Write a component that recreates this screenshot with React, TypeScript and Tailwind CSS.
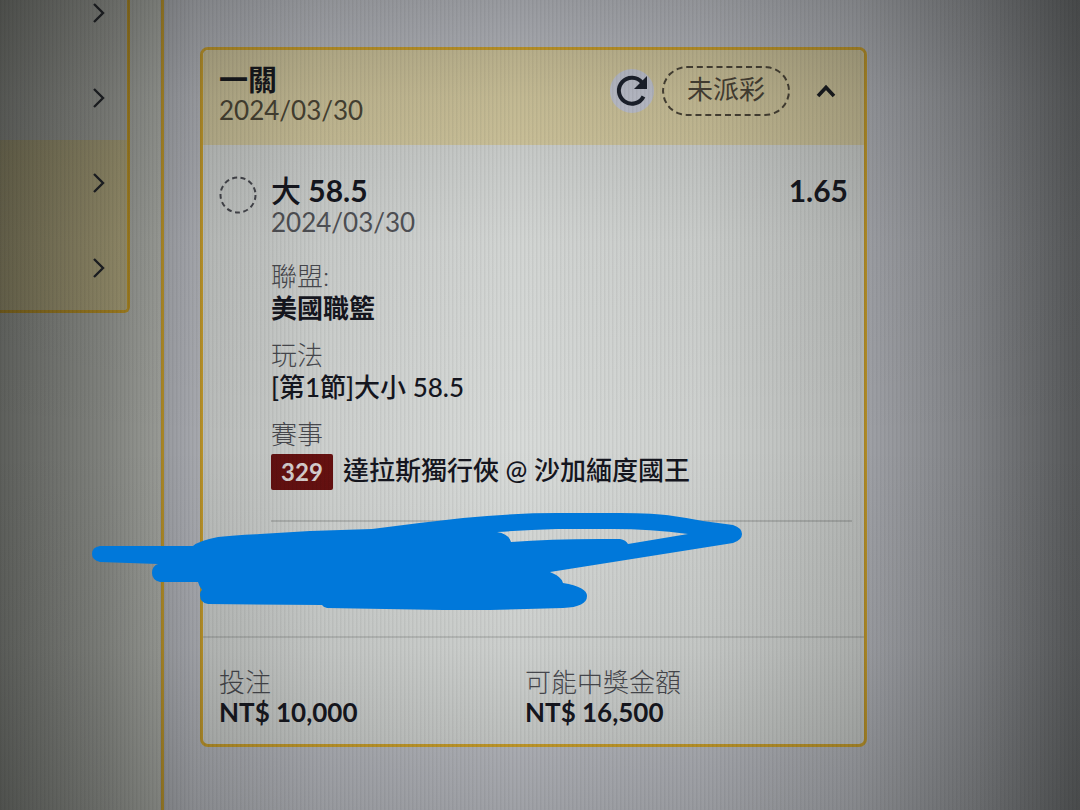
import React from 'react';

const rows = [
  { label: '選項一', active: false },
  { label: '選項二', active: false },
  { label: '選項三', active: true },
  { label: '選項四', active: true },
];

function Sidebar() {
  return (
    <aside className="w-[164px] shrink-0 overflow-hidden border-r-[3px] border-[#d6a82c] bg-[#c4c6c0]">
      <nav className="-mt-[30px] mr-[31px] overflow-hidden rounded-br-md border-r-[3px] border-b-[3px] border-[#dcaa24]">
        {rows.map((row) => (
          <button
            key={row.label}
            type="button"
            aria-label={row.label}
            className={
              row.active
                ? 'flex h-[85px] w-full items-center justify-end bg-[#cfc392] pr-[22px]'
                : 'flex h-[85px] w-full items-center justify-end bg-[#c3c4be] pr-[22px]'
            }
          >
            <svg width="12" height="20" viewBox="0 0 12 20" fill="none" stroke="#20222a" strokeWidth="2.4">
              <path d="M1 1 L10 10 L1 19" />
            </svg>
          </button>
        ))}
      </nav>
    </aside>
  );
}

function Field({ label, children }: { label: string; children: React.ReactNode }) {
  return (
    <div>
      <dt className="font-light leading-8 text-[#4b4c52]">{label}</dt>
      <dd className="font-medium leading-8 text-[#15161f]">{children}</dd>
    </div>
  );
}

function BetCard() {
  return (
    <article className="rounded-lg border-[3px] border-[#d6a82c] bg-[#d8dbd9] text-[26px]">
      <header className="flex h-[95px] items-start justify-between rounded-t-md bg-[#dacfa4] pt-4 pr-[26px] pl-4">
        <div className="-mt-0.5">
          <h2 className="text-[29px] font-bold leading-8 text-[#15161c]">一關</h2>
          <p className="leading-7 text-[#4d4736]">2024/03/30</p>
        </div>
        <div className="flex items-center gap-2">
          <button
            type="button"
            aria-label="重新整理"
            className="flex h-11 w-11 items-center justify-center rounded-full bg-[#cccfdc]"
          >
            <svg width="34" height="34" viewBox="0 0 34 34" fill="none">
              <path d="M28.5 22.5 A13 13 0 1 1 27 8.5" stroke="#1b202d" strokeWidth="4" />
              <path d="M32 2 V15 H19 Z" fill="#1b202d" />
            </svg>
          </button>
          <span className="flex h-[50px] w-32 items-center justify-center rounded-full border-2 border-dashed border-[#4c4537] pb-1 text-[#4c4537]">
            未派彩
          </span>
          <button type="button" aria-label="收合" className="ml-4 flex h-10 w-6 items-center justify-center">
            <svg width="20" height="14" viewBox="0 0 20 14" fill="none" stroke="#17191e" strokeWidth="3.6">
              <path d="M2 12 L10 3.5 L18 12" />
            </svg>
          </button>
        </div>
      </header>

      <section className="flex gap-3.5 pt-[27px] pr-3 pl-4">
        <svg className="mt-1 shrink-0" width="38" height="38" viewBox="0 0 38 38" fill="none">
          <circle cx="19" cy="19" r="17.5" stroke="#4a4b52" strokeWidth="2" strokeDasharray="5 3.45" />
        </svg>
        <div className="min-w-0 flex-1 border-b-2 border-[#b9bcba] pb-[30px]">
          <div className="flex justify-between pr-1 text-[30px] font-bold leading-9 text-[#15161f]">
            <h3>
              <span className="font-medium">大</span> 58.5
            </h3>
            <span>1.65</span>
          </div>
          <p className="leading-7 text-[#54555a]">2024/03/30</p>
          <dl className="mt-6 flex flex-col gap-[15px]">
            <Field label="聯盟:">
              <span className="font-bold">美國職籃</span>
            </Field>
            <Field label="玩法">[第1節]大小 58.5</Field>
            <Field label="賽事">
              <span className="flex items-center gap-2.5 pt-1">
                <span className="flex h-9 w-[62px] items-center justify-center rounded-xs bg-[#6a1010] text-2xl font-bold text-[#e4dcdc]">
                  329
                </span>
                <span className="whitespace-nowrap pb-1">達拉斯獨行俠 @ 沙加緬度國王</span>
              </span>
            </Field>
          </dl>
        </div>
      </section>

      <dl className="mt-[114px] grid grid-cols-[306px_1fr] border-t-2 border-[#bec1bf] px-4 pt-7 pb-[18px]">
        {[
          { label: '投注', value: 'NT$ 10,000' },
          { label: '可能中獎金額', value: 'NT$ 16,500' },
        ].map((item) => (
          <div key={item.label}>
            <dt className="font-light leading-8 text-[#4b4c52]">{item.label}</dt>
            <dd className="font-bold leading-7 text-[#15161f]">{item.value}</dd>
          </div>
        ))}
      </dl>
    </article>
  );
}

function Scribble() {
  return (
    <svg
      className="pointer-events-none absolute top-0 left-0"
      width="1080"
      height="810"
      viewBox="0 0 1080 810"
      aria-hidden="true"
    >
      <path
        fill="#0078da"
        fillRule="evenodd"
        d="M100 546 H193 Q198 541 218 537 Q235 535 260 534 L310 531 L372 529 Q417 523 463 518 Q515 513 557 513 L620 513 Q655 513 673 516 Q688 518 703 521 L733 525 Q742 528 742 534 Q742 540 733 543 L550 572 Q562 577 563 583 Q587 587 587 596 Q587 607 563 608 L490 610 H443 L327 608 Q323 607 322 605 L208 604 Q200 603 200 595 Q200 591 202 590 Q199 586 198 582 H160 Q152 580 152 573 Q152 566 158 564 L100 562 Q92 560 92 554 Q92 547 100 546 Z M497 532 Q509 534 511 542 Q550 539 600 539 H620 Q626 540 628 544 L688 534 Q650 529 613 529 H557 Q525 530 497 532 Z"
      />
    </svg>
  );
}

export default function App() {
  return (
    <div className="relative flex min-h-screen overflow-hidden bg-[#c2c4cb] font-['Lato','Noto_Sans_CJK_TC',sans-serif]">
      <Sidebar />
      <main className="min-w-0 flex-1 pt-[47px] pr-[213px] pb-[60px] pl-9">
        <BetCard />
      </main>
      <div className="pointer-events-none absolute inset-0 bg-[linear-gradient(to_right,rgba(20,22,20,0.58)_0%,rgba(20,22,20,0.38)_10%,rgba(20,22,20,0.17)_18%,rgba(20,22,20,0.06)_30%,rgba(20,22,20,0)_48%,rgba(20,22,20,0.05)_65%,rgba(20,22,20,0.18)_79%,rgba(20,22,20,0.38)_90%,rgba(20,22,20,0.62)_100%)]" />
      <div className="pointer-events-none absolute inset-0 bg-[linear-gradient(to_bottom,rgba(20,22,20,0.24)_0%,rgba(20,22,20,0.12)_12%,rgba(20,22,20,0.03)_30%,rgba(20,22,20,0)_55%,rgba(20,22,20,0.06)_80%,rgba(20,22,20,0.2)_100%)]" />
      <div className="pointer-events-none absolute inset-0 bg-[repeating-linear-gradient(to_right,rgba(0,0,0,0.05)_0px,rgba(0,0,0,0.05)_1px,transparent_2px,transparent_4px)]" />
      <Scribble />
    </div>
  );
}
